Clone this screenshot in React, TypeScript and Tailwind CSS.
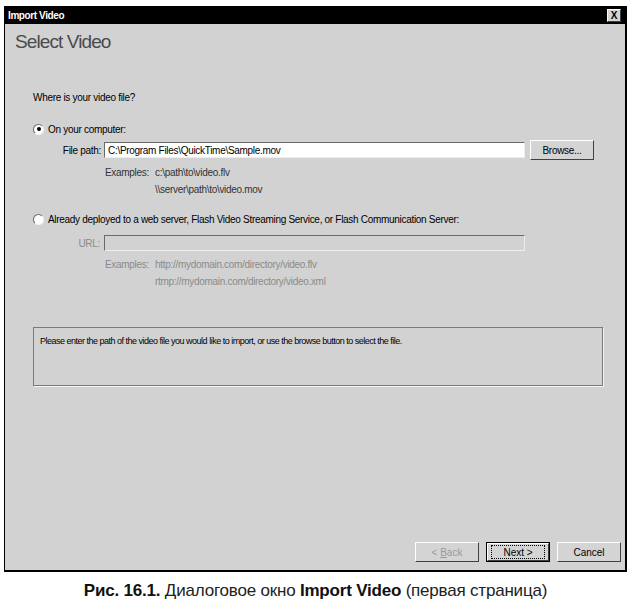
import React from "react";

function Radio({ checked }: { checked?: boolean }) {
  return (
    <span className="relative inline-flex h-[11px] w-[11px] shrink-0 items-center justify-center rounded-full border border-t-[#6a6a6a] border-l-[#6a6a6a] border-r-[#f4f4f4] border-b-[#f4f4f4] bg-white">
      {checked && <span className="h-[4px] w-[4px] rounded-full bg-black" />}
    </span>
  );
}

function Btn({ children, focused, disabled, w = "w-[64px]" }: { children: React.ReactNode; focused?: boolean; disabled?: boolean; w?: string }) {
  return (
    <div className={`${w} h-[20px] ${focused ? "border border-black" : ""}`}>
      <div className="flex h-full w-full items-center justify-center border border-t-white border-l-white border-r-[#404040] border-b-[#404040] bg-[#d4d4d4]">
        <div className={`flex h-[14px] w-[calc(100%-6px)] items-center justify-center ${focused ? "border border-dotted border-black" : ""}`}>
          <span className={`text-[10px] ${disabled ? "text-[#9a9a9a]" : "text-black"}`}>{children}</span>
        </div>
      </div>
    </div>
  );
}

export default function App() {
  const font = { fontFamily: "'Liberation Sans', Arial, sans-serif" };
  return (
    <div className="h-[615px] w-[631px] overflow-hidden bg-white" style={font}>
      <div className="ml-[4px] mt-[6px] flex h-[566px] w-[623px] flex-col border-l border-r-2 border-b-2 border-t border-black">
        {/* Title bar */}
        <div className="flex h-[17px] items-center justify-between bg-black pl-[3px] pr-[4px]">
          <span className="text-[10px] font-bold leading-none tracking-[-0.4px] text-white">Import Video</span>
          <span className="flex h-[13px] w-[14px] items-center justify-center border border-t-white border-l-white border-r-[#404040] border-b-[#404040] bg-[#d4d4d4] text-[10px] font-bold leading-none text-black">
            X
          </span>
        </div>
        {/* Body */}
        <div className="flex flex-1 flex-col bg-[#d2d2d2]">
          <div className="pl-[10px] pt-[6px] text-[19px] leading-[24px] tracking-[-0.9px] text-[#4a4a4a]">Select Video</div>

          <div className="pl-[28px] pt-[38px] text-[10px] leading-[12px] tracking-[-0.3px] text-black">Where is your video file?</div>

          <div className="mt-[19px] flex h-[12px] items-center gap-[4px] pl-[28px] text-[10px] tracking-[-0.3px]">
            <Radio checked />
            <span>On your computer:</span>
          </div>

          <div className="mt-[5px] flex h-[20px] items-center text-[10px] tracking-[-0.3px]">
            <span className="w-[99px] pr-[3px] text-right">File path:</span>
            <div className="flex h-[16px] w-[421px] items-center border border-t-[#6a6a6a] border-l-[#6a6a6a] border-r-[#eeeeee] border-b-[#eeeeee] bg-white pl-[3px] text-black">
              C:\Program Files\QuickTime\Sample.mov
            </div>
            <div className="ml-[5px]">
              <Btn>Browse...</Btn>
            </div>
          </div>

          <div className="mt-[6px] flex h-[12px] items-center text-[10px] tracking-[-0.3px] text-[#333]">
            <span className="box-content w-[50px] pl-[100px]">Examples:</span>
            <span>c:\path\to\video.flv</span>
          </div>
          <div className="mt-[5px] flex h-[12px] items-center pl-[150px] text-[10px] tracking-[-0.3px] text-[#333]">
            \\server\path\to\video.mov
          </div>

          <div className="mt-[18px] flex h-[12px] items-center gap-[4px] pl-[28px] text-[10px] tracking-[-0.3px]">
            <Radio />
            <span>Already deployed to a web server, Flash Video Streaming Service, or Flash Communication Server:</span>
          </div>

          <div className="mt-[9px] flex h-[18px] items-center text-[10px] tracking-[-0.3px]">
            <span className="w-[99px] pr-[4px] text-right text-[#8a8a8a]">URL:</span>
            <div className="h-[16px] w-[421px] border border-t-[#6a6a6a] border-l-[#6a6a6a] border-r-[#eeeeee] border-b-[#eeeeee] bg-[#d2d2d2]" />
          </div>

          <div className="mt-[6px] flex h-[12px] items-center text-[10px] tracking-[-0.3px] text-[#8a8a8a]">
            <span className="box-content w-[50px] pl-[100px]">Examples:</span>
            <span>http://mydomain.com/directory/video.flv</span>
          </div>
          <div className="mt-[5px] flex h-[12px] items-center pl-[150px] text-[10px] tracking-[-0.3px] text-[#8a8a8a]">
            rtmp://mydomain.com/directory/video.xml
          </div>

          <div className="ml-[28px] mt-[40px] h-[59px] w-[570px] border border-[#7a7a7a] px-[6px] pt-[7px] text-[9px] tracking-[-0.5px] text-black shadow-[1px_1px_0_#f4f4f4]">
            Please enter the path of the video file you would like to import, or use the browse button to select the file.
          </div>

          <div className="flex-1" />

          <div className="mb-[8px] flex justify-end gap-[7px] pr-[4px]">
            <Btn disabled>
              &lt; <span className="underline">B</span>ack
            </Btn>
            <Btn focused>Next &gt;</Btn>
            <Btn>Cancel</Btn>
          </div>
        </div>
      </div>
      <div className="mt-[9px] text-center text-[17px] leading-[20px] tracking-[-0.2px] text-[#222]">
        <b className="text-[#111]">Рис. 16.1.</b> Диалоговое окно <b className="text-[#111]">Import Video</b> (первая страница)
      </div>
    </div>
  );
}
